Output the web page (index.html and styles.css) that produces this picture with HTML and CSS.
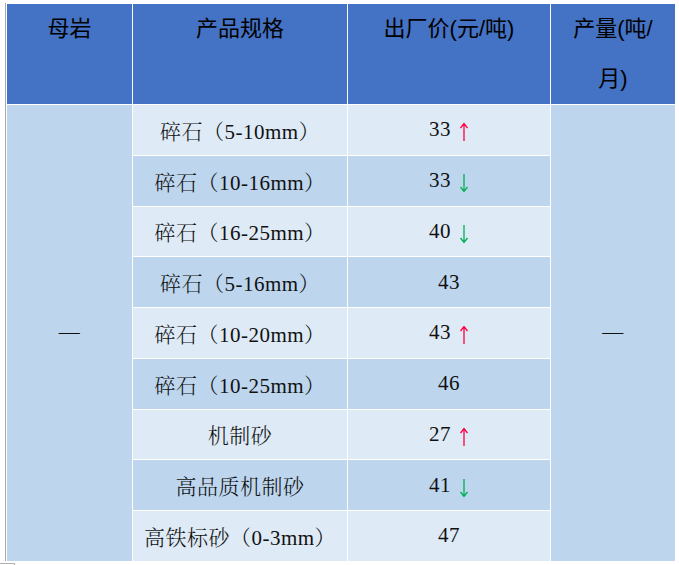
FILE: index.html
```html
<!DOCTYPE html>
<html lang="zh-CN">
<head>
<meta charset="utf-8">
<title>价格表</title>
<link rel="stylesheet" href="styles.css">
</head>
<body>
<div class="page">
  <div class="frame">
    <div class="table">
      <div class="th">母岩</div>
      <div class="th">产品规格</div>
      <div class="th">出厂价(元/吨)</div>
      <div class="th">产量(吨/<br>月)</div>

      <div class="td merged col-first">—</div>
      <div class="td merged col-last">—</div>

      <div class="td lt">碎石（5-10mm）</div>
      <div class="td lt">33<svg class="arrow up" viewBox="0 0 10 20" aria-label="上涨"><path d="M5 1.5V19M1.5 6L5 1.5L8.5 6"/></svg></div>

      <div class="td dk">碎石（10-16mm）</div>
      <div class="td dk">33<svg class="arrow down" viewBox="0 0 10 20" aria-label="下跌"><path d="M5 1V18.5M1.5 14L5 18.5L8.5 14"/></svg></div>

      <div class="td lt">碎石（16-25mm）</div>
      <div class="td lt">40<svg class="arrow down" viewBox="0 0 10 20" aria-label="下跌"><path d="M5 1V18.5M1.5 14L5 18.5L8.5 14"/></svg></div>

      <div class="td dk">碎石（5-16mm）</div>
      <div class="td dk">43</div>

      <div class="td lt">碎石（10-20mm）</div>
      <div class="td lt">43<svg class="arrow up" viewBox="0 0 10 20" aria-label="上涨"><path d="M5 1.5V19M1.5 6L5 1.5L8.5 6"/></svg></div>

      <div class="td dk">碎石（10-25mm）</div>
      <div class="td dk">46</div>

      <div class="td lt">机制砂</div>
      <div class="td lt">27<svg class="arrow up" viewBox="0 0 10 20" aria-label="上涨"><path d="M5 1.5V19M1.5 6L5 1.5L8.5 6"/></svg></div>

      <div class="td dk">高品质机制砂</div>
      <div class="td dk">41<svg class="arrow down" viewBox="0 0 10 20" aria-label="下跌"><path d="M5 1V18.5M1.5 14L5 18.5L8.5 14"/></svg></div>

      <div class="td lt">高铁标砂（0-3mm）</div>
      <div class="td lt">47</div>
    </div>
  </div>
  <div class="corner"></div>
</div>
</body>
</html>
```

FILE: styles.css
```css
html, body {
  margin: 0;
  padding: 0;
  background: #ffffff;
}

.page {
  padding: 3px 0 0 5px;
}

.frame {
  width: fit-content;
  border-left: 1px solid #a9a9a9;
  padding: 1px 0 0 1px;
}

.table {
  display: grid;
  grid-template-columns: 125px 214px 202px 124px;
  grid-template-rows: 100px repeat(9, 49.75px);
  gap: 1px;
  background: #ffffff;
}

.th {
  background: #4472c4;
  color: #000000;
  text-align: center;
  font-family: "Liberation Sans", "Noto Sans CJK SC", sans-serif;
  font-size: 22px;
  line-height: 50px;
}

.td {
  display: flex;
  align-items: center;
  justify-content: center;
  font-family: "Liberation Serif", "Noto Serif CJK SC", "Noto Sans CJK SC", serif;
  font-size: 21px;
  font-weight: 300;
  letter-spacing: 0.5px;
  color: #111111;
  white-space: pre;
}

.lt {
  background: #deeaf6;
}

.dk {
  background: #bdd6ee;
}

.merged {
  background: #bdd6ee;
  grid-row: 2 / span 9;
}

.col-first {
  grid-column: 1;
}

.col-last {
  grid-column: 4;
}

.arrow {
  width: 10px;
  height: 20px;
  margin: 5px 0 0 8px;
  fill: none;
  stroke-width: 1.3;
}

.up {
  stroke: #ff0040;
}

.down {
  stroke: #00b050;
}

.corner {
  margin: 2px 0 0 -5px;
  width: 14px;
  height: 3px;
  border-top: 1px solid #b0b0b0;
  border-right: 1px solid #b0b0b0;
}
```
